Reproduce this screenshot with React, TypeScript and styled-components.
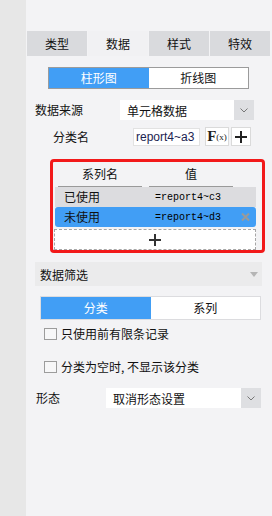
import React from "react";
import styled, { createGlobalStyle } from "styled-components";

const Global = createGlobalStyle`
  html, body { margin: 0; padding: 0; }
  body { font-family: "Noto Sans CJK SC", "Noto Sans", sans-serif; font-size: 12px; color: #111; }
  * { box-sizing: border-box; }
`;

const BLUE = "#419ef5";

const Page = styled.div`
  width: 272px;
  height: 516px;
  display: flex;
  background: #f3f3f5;
  overflow: hidden;
`;

const Sidebar = styled.div`
  width: 26px;
  flex: none;
  background: #e7e7e7;
`;

const Main = styled.div`
  flex: 1;
  display: flex;
  flex-direction: column;
  padding-top: 31px;
`;

const Tabs = styled.div`
  display: grid;
  grid-template-columns: repeat(4, 1fr);
  gap: 1px;
  margin: 0 2px 0 1px;
  height: 25px;
`;

const Tab = styled.div<{ $active?: boolean }>`
  display: flex;
  align-items: center;
  justify-content: center;
  background: ${(p) => (p.$active ? "#f1f1f3" : "#d9dadd")};
  font-size: 12px;
  line-height: 1;
`;

const Segmented = styled.div<{ $border: string }>`
  display: grid;
  grid-template-columns: 1fr 1fr;
  border: 1px solid ${(p) => p.$border};
  background: #fff;
`;

const ChartToggle = styled(Segmented)`
  margin: 11px 0 0 22px;
  width: 201px;
  height: 22px;
`;

const FilterToggle = styled(Segmented)`
  margin: 10px 0 0 14px;
  width: 221px;
  height: 24px;
`;

const Seg = styled.div<{ $on?: boolean }>`
  display: flex;
  align-items: center;
  justify-content: center;
  background: ${(p) => (p.$on ? BLUE : "#fff")};
  color: ${(p) => (p.$on ? "#fff" : "#111")};
  font-size: 12px;
  line-height: 1;
`;

const FormRow = styled.div<{ $top: number; $indent: number }>`
  display: flex;
  align-items: center;
  margin-top: ${(p) => p.$top}px;
  padding-left: ${(p) => p.$indent}px;
`;

const Label = styled.div<{ $w: number }>`
  width: ${(p) => p.$w}px;
  flex: none;
  font-size: 12px;
  line-height: 1;
`;

const Select = styled.div<{ $w: number }>`
  width: ${(p) => p.$w}px;
  height: 20px;
  display: flex;
  background: #fff;
`;

const SelectText = styled.div`
  flex: 1;
  display: flex;
  align-items: center;
  padding-left: 7px;
  font-size: 12px;
`;

const SelectArrow = styled.div`
  width: 20px;
  background: #dedfe2;
  display: flex;
  align-items: center;
  justify-content: center;
`;

const Input = styled.div`
  width: 67px;
  height: 18px;
  background: #fff;
  border: 1px solid #e2e2e2;
  display: flex;
  align-items: center;
  padding-left: 2px;
  font-family: "Liberation Sans", Arial, sans-serif;
  font-size: 12px;
  color: #1c2452;
  white-space: nowrap;
  overflow: hidden;
`;

const IconBtn = styled.div<{ $w: number; $ml: number }>`
  width: ${(p) => p.$w}px;
  height: 19px;
  margin-left: ${(p) => p.$ml}px;
  background: #fff;
  border: 1px solid #dadada;
  display: flex;
  align-items: center;
  justify-content: center;
`;

const FxBig = styled.span`
  font-family: "Liberation Serif", serif;
  font-weight: bold;
  font-size: 15px;
  line-height: 1;
  color: #222;
`;

const FxSmall = styled.span`
  font-family: "Liberation Serif", serif;
  font-size: 9px;
  line-height: 1;
  color: #222;
  margin-top: 2px;
`;

const SeriesBox = styled.div`
  margin: 13px 0 0 24px;
  width: 215px;
  border: 3px solid #f2191a;
  border-radius: 4px;
  padding: 0 6px 0 1px;
`;

const HeaderRow = styled.div`
  display: flex;
  height: 25px;
  align-items: stretch;
  padding-left: 4px;
`;

const HeaderCell = styled.div<{ $ml: number }>`
  width: 84px;
  margin-left: ${(p) => p.$ml}px;
  border-bottom: 1px solid #9a9a9a;
  display: flex;
  align-items: center;
  justify-content: center;
  font-size: 12px;
  line-height: 1;
`;

const SeriesRow = styled.div<{ $sel?: boolean }>`
  margin-left: 1px;
  height: 20px;
  display: flex;
  align-items: center;
  background: ${(p) => (p.$sel ? BLUE : "#dcdcdf")};
  border-radius: ${(p) => (p.$sel ? "3px" : "0")};
  position: relative;
  color: #111;
`;

const SeriesName = styled.div`
  width: 100px;
  padding-left: 9px;
  font-size: 12px;
  line-height: 1;
`;

const SeriesValue = styled.div`
  font-family: "Liberation Mono", "DejaVu Sans Mono", monospace;
  font-size: 10px;
  color: #000;
`;

const RemoveBtn = styled.div`
  position: absolute;
  right: 6px;
  top: 50%;
  transform: translateY(-50%);
  display: flex;
`;

const AddRow = styled.div`
  margin-top: 2px;
  height: 21px;
  background: #fff;
  border: 1px dashed #a6a6a6;
  display: flex;
  align-items: center;
  justify-content: center;
`;

const SectionHead = styled.div`
  margin: 9px 0 0 9px;
  width: 227px;
  height: 24px;
  background: #ebebec;
  display: flex;
  align-items: center;
  justify-content: space-between;
  padding: 0 4px 0 5px;
  font-size: 12px;
`;

const CheckRow = styled.div<{ $top: number }>`
  display: flex;
  align-items: center;
  margin: ${(p) => p.$top}px 0 0 18px;
  gap: 4px;
  font-size: 12px;
  line-height: 1;
`;

const Box = styled.div`
  width: 13px;
  height: 12px;
  border: 1px solid #9c9c9c;
  background: #f7f7f8;
`;

const Chevron = () => (
  <svg width="8" height="5" viewBox="0 0 8 5">
    <path d="M0.5 0.5 L4 4 L7.5 0.5" fill="none" stroke="#777" strokeWidth="1" />
  </svg>
);

export default function App() {
  return (
    <>
      <Global />
      <Page>
        <Sidebar />
        <Main>
          <Tabs>
            <Tab>类型</Tab>
            <Tab $active>数据</Tab>
            <Tab>样式</Tab>
            <Tab>特效</Tab>
          </Tabs>

          <ChartToggle $border="#9b9b9b">
            <Seg $on>柱形图</Seg>
            <Seg>折线图</Seg>
          </ChartToggle>

          <FormRow $top={11} $indent={9}>
            <Label $w={85}>数据来源</Label>
            <Select $w={134}>
              <SelectText>单元格数据</SelectText>
              <SelectArrow>
                <Chevron />
              </SelectArrow>
            </Select>
          </FormRow>

          <FormRow $top={7} $indent={27}>
            <Label $w={80}>分类名</Label>
            <Input>report4~a3</Input>
            <IconBtn $w={24} $ml={5}>
              <FxBig>F</FxBig>
              <FxSmall>(x)</FxSmall>
            </IconBtn>
            <IconBtn $w={20} $ml={2}>
              <svg width="14" height="14" viewBox="0 0 14 14">
                <path d="M7 1 V13 M1 7 H13" stroke="#222" strokeWidth="2" />
              </svg>
            </IconBtn>
          </FormRow>

          <SeriesBox>
            <HeaderRow>
              <HeaderCell $ml={0}>系列名</HeaderCell>
              <HeaderCell $ml={7}>值</HeaderCell>
            </HeaderRow>
            <SeriesRow>
              <SeriesName>已使用</SeriesName>
              <SeriesValue>=report4~c3</SeriesValue>
            </SeriesRow>
            <SeriesRow $sel>
              <SeriesName>未使用</SeriesName>
              <SeriesValue>=report4~d3</SeriesValue>
              <RemoveBtn>
                <svg width="9" height="9" viewBox="0 0 9 9">
                  <path d="M1 1 L8 8 M8 1 L1 8" stroke="#9a9a9a" strokeWidth="2" />
                </svg>
              </RemoveBtn>
            </SeriesRow>
            <AddRow>
              <svg width="12" height="12" viewBox="0 0 12 12">
                <path d="M6 0 V12 M0 6 H12" stroke="#333" strokeWidth="2" />
              </svg>
            </AddRow>
          </SeriesBox>

          <SectionHead>
            <span>数据筛选</span>
            <svg width="8" height="5" viewBox="0 0 8 5">
              <path d="M0 0 H8 L4 5 Z" fill="#b5b5b5" />
            </svg>
          </SectionHead>

          <FilterToggle $border="#dcdcdf">
            <Seg $on>分类</Seg>
            <Seg>系列</Seg>
          </FilterToggle>

          <CheckRow $top={8}>
            <Box />
            <span>只使用前有限条记录</span>
          </CheckRow>

          <CheckRow $top={21}>
            <Box />
            <span>分类为空时, 不显示该分类</span>
          </CheckRow>

          <FormRow $top={15} $indent={10}>
            <Label $w={70}>形态</Label>
            <Select $w={155}>
              <SelectText>取消形态设置</SelectText>
              <SelectArrow>
                <Chevron />
              </SelectArrow>
            </Select>
          </FormRow>
        </Main>
      </Page>
    </>
  );
}
